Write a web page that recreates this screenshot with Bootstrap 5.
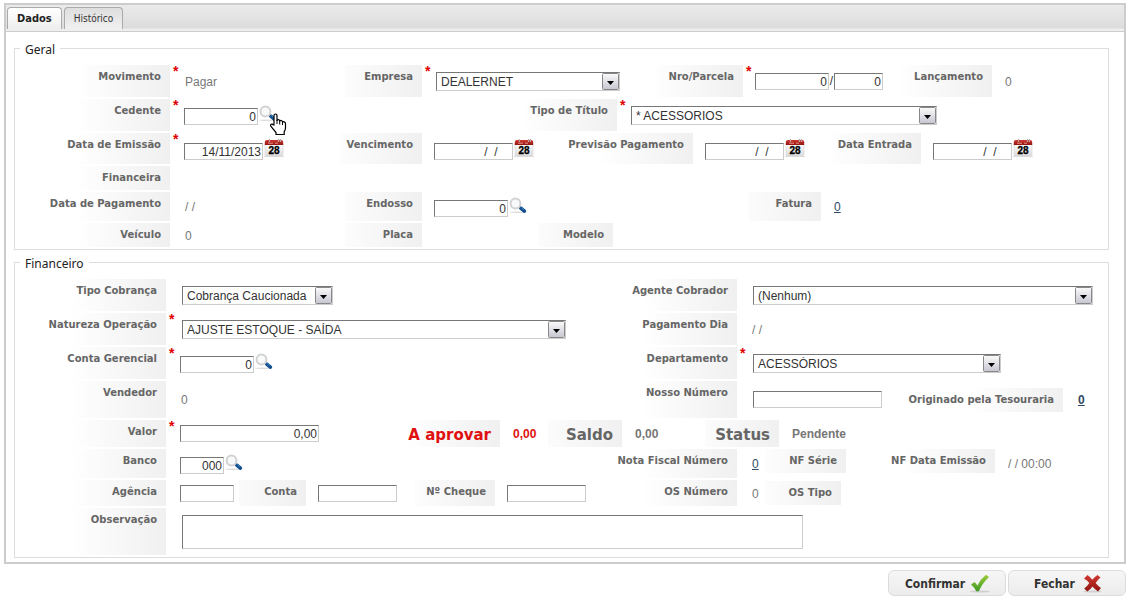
<!DOCTYPE html>
<html lang="pt-BR">
<head>
<meta charset="utf-8">
<meta name="viewport" content="width=device-width, initial-scale=1">
<title>Título</title>
<link href="https://cdn.jsdelivr.net/npm/bootstrap@5.3.0/dist/css/bootstrap.min.css" rel="stylesheet">
<style>
body { background: #fff; color: #777; font: 12px/14px "Liberation Sans", Arial, sans-serif; }

/* Panel and tabs */
.panel { border: 2px solid #ccc; margin: 3px 4px 6px; }
.panel .nav-tabs { background: linear-gradient(#ebebeb, #dcdcdc 23px, #eee 24px); border-bottom: 1px solid #ccc; height: 27px; padding: 2px 1px 2px; gap: 2px; }
.panel .nav-link { border: 1px solid #aaa; border-bottom: 0; border-radius: 4px 4px 0 0; margin: 0; padding: 0 9px; height: 22px; font: 10px/20px "DejaVu Sans Condensed", "DejaVu Sans", sans-serif; color: #333; background: linear-gradient(#dedede, #f0f0f0); }
.panel .nav-link.active { font-weight: 700; font-size: 11px; color: #222; background: linear-gradient(#fff, #eee); border-color: #aaa; }
.panel-inner { padding: 8px 15px 4px 8px; }

/* Groups */
.group { border: 1px solid #ddd; padding: 8px 3px 2px; }
.group + .group { margin-top: 4px; }
.group legend { float: none; width: auto; margin: 0 0 0 2px; padding: 2px 5px 0; font: 12px/15px "Noto Sans", sans-serif; color: #222; }
.line { display: grid; margin-bottom: 2px; height: 32px; }
.line:last-child { margin-bottom: 0; }
.line > * { min-width: 0; }
.h24 { height: 24px; } .h26 { height: 26px; } .h27 { height: 27px; } .h29 { height: 29px; }
.h31 { height: 31px; } .h37 { height: 37px; } .h47 { height: 47px; }

.g1 { grid-template-columns: 152fr 175fr 77fr 233fr 88fr 157fr 92fr 113fr; }
.g2 { grid-template-columns: 152fr 355fr 92fr 488fr; }
.g3 { grid-template-columns: 152fr 170fr 82fr 138fr 133fr 137fr 91fr 184fr; }
.g4 { grid-template-columns: 152fr 935fr; }
.g5 { grid-template-columns: 152fr 175fr 77fr 327fr 72fr 284fr; }
.g6 { grid-template-columns: 152fr 175fr 77fr 117fr 74fr 492fr; }
.f1 { grid-template-columns: 148fr 459fr 112fr 368fr; }
.f4 { grid-template-columns: 148fr 459fr 112fr 158fr 168fr 42fr; }
.f5 { grid-template-columns: 148fr 234fr 100fr 48fr 74fr 83fr 74fr 326fr; }
.f6 { grid-template-columns: 148fr 459fr 112fr 28fr 81fr 34fr 115fr 110fr; }
.f7 { grid-template-columns: 148fr 73fr 67fr 109fr 80fr 130fr 112fr 28fr 76fr 264fr; }
.f8 { grid-template-columns: 148fr 939fr; }

.tag { display: flex; justify-content: flex-end; padding: 5px 9px 0 0; white-space: nowrap; color: #666; font: bold 10px/14px "DejaVu Sans", Verdana, sans-serif; background: linear-gradient(to right, rgba(240,240,240,0), #f0f0f0) right / 95px 100% no-repeat; }
.tag-big { font-size: 15px; line-height: 20px; }
.tag-short { height: 24px; }
.val { display: flex; align-items: center; white-space: nowrap; padding-left: 12px; position: relative; }
.val.main { padding-left: 14px; }
.val > .txt { margin-left: 1px; padding-top: 1px; }
.val > b.txt { padding-top: 0; }
.val.wide { padding-left: 16px; }
.req::before { content: "*"; position: absolute; left: 3px; top: -1px; color: #e00000; font: bold 14px/14px "Liberation Sans", Arial, sans-serif; }
.due { color: #e01010; }
.val a { color: #2f4a66; }

/* Controls */
.box, .pick { border: 1px solid; border-color: #777 #ccc #ccc #777; border-radius: 0; background-color: #fff; color: #333; font: 12px/14px "Liberation Sans", Arial, sans-serif; }
.box { height: 17px; padding: 1px 1px 0; text-align: right; }
.pick { appearance: none; height: 19px; padding: 1px 18px 0 4px; margin-left: 2px;
  background: #fff url("data:image/svg+xml,%3Csvg xmlns='http://www.w3.org/2000/svg' width='17' height='17'%3E%3ClinearGradient id='g' x2='0' y2='1'%3E%3Cstop stop-color='%23fbfbfb'/%3E%3Cstop offset='1' stop-color='%23c6c6d2'/%3E%3C/linearGradient%3E%3Crect x='.5' y='.5' width='16' height='16' rx='1' fill='url(%23g)' stroke='%23888'/%3E%3Cpath d='M5 8h7l-3.500 4z' fill='%23000'/%3E%3C/svg%3E") right 0 center no-repeat; }
.area { height: 34px; margin-left: 2px; resize: none; text-align: left; }
.w45 { width: 44px; } .w49 { width: 49px; } .w54 { width: 54px; } .w74 { width: 74px; } .w79 { width: 79px; }
.w129 { width: 129px; } .w139 { width: 139px; } .w151 { width: 151px; } .w184 { width: 184px; } .w248 { width: 248px; }
.w306 { width: 306px; } .w340 { width: 340px; } .w384 { width: 384px; } .w621 { width: 621px; }
.slash { width: 5px; text-align: center; color: #333; }
.ibtn { border: 0; background: none; padding: 0; display: block; margin: 0 0 3px 1px; position: relative; }
.ibtn.date { margin-bottom: 2px; }
.ibtn svg { display: block; }
.hand { position: absolute; left: 10px; top: 8px; }

.actions { gap: 2px; }
.act { width: 118px; height: 26px; border: 1px solid #dcdcdc; border-radius: 6px; padding: 2px 0 0 2px; color: #333; background: linear-gradient(#f6f6f6, #ececec); font: bold 12px/20px "DejaVu Sans Condensed", "DejaVu Sans", sans-serif; }
</style>
</head>
<body>
<svg width="0" height="0" class="position-absolute" aria-hidden="true">
  <defs>
    <linearGradient id="lgRed" x2="0" y2="1"><stop stop-color="#d2382f"/><stop offset="1" stop-color="#8e1512"/></linearGradient>
    <linearGradient id="lgGreen" x2="0" y2="1"><stop stop-color="#9ccc35"/><stop offset="1" stop-color="#3f9a28"/></linearGradient>
    <linearGradient id="lgPage" x2="0" y2="1"><stop stop-color="#fff"/><stop offset="1" stop-color="#dcdcdc"/></linearGradient>
  </defs>
</svg>
<svg class="d-none" aria-hidden="true">
  <symbol id="lens" viewBox="0 0 18 17">
    <ellipse cx="8" cy="15.300" rx="8" ry=".8" fill="#ddd"/>
    <path d="M10.500 10.500l2 1.500" stroke="#999" stroke-width="2"/>
    <path d="M11.800 11.200l3.600 3" stroke="#134f8f" stroke-width="3.600" stroke-linecap="round"/>
    <path d="M12.300 10.700l2.600 2" stroke="#3f86c4" stroke-width="1"/>
    <circle cx="6.500" cy="6.500" r="4.900" fill="#f7f9fa" stroke="#d2d2d2" stroke-width="2"/>
  </symbol>
  <symbol id="cal" viewBox="0 0 20 20">
    <rect x="0" y="18" width="20" height="1" fill="#ddd"/>
    <rect x="1" y="5" width="18" height="13" rx="1.500" fill="url(#lgPage)" stroke="#d5d5d5" stroke-width=".6"/>
    <path d="M.8 7V4Q.8 2 3 2H17Q19.200 2 19.200 4V7z" fill="url(#lgRed)"/>
    <path d="M5.500 1v3M14.500 1v3M16.500 1v3" stroke="#b9a5a5" stroke-width="1.200"/>
    <path d="M4 5.200h5M11 5.200h3" stroke="#e9908a" stroke-width="1"/>
    <text x="10" y="15.500" text-anchor="middle" font-family="Liberation Sans, Arial, sans-serif" font-weight="700" font-size="10" fill="#000" stroke="#000" stroke-width=".3">28</text>
  </symbol>
</svg>

<main class="panel">
  <ul class="nav nav-tabs" role="tablist">
    <li class="nav-item"><button class="nav-link active" type="button" role="tab" aria-selected="true">Dados</button></li>
    <li class="nav-item"><button class="nav-link" type="button" role="tab" aria-selected="false">Histórico</button></li>
  </ul>
  <form class="panel-inner" id="titulo">
    <fieldset class="group">
      <legend>Geral</legend>
      <div class="line g1">
        <span class="tag">Movimento</span><div class="val main req"><span class="txt">Pagar</span></div>
        <label class="tag" for="empresa">Empresa</label><div class="val req"><select class="pick w184" id="empresa"><option>DEALERNET</option></select></div>
        <label class="tag" for="nro">Nro/Parcela</label><div class="val req"><input class="box w74" id="nro" value="0"><span class="slash">/</span><input class="box w49" aria-label="Parcela" value="0"></div>
        <span class="tag">Lançamento</span><div class="val"><span class="txt">0</span></div>
      </div>
      <div class="line g2">
        <label class="tag" for="cedente">Cedente</label>
        <div class="val main req"><div class="d-flex align-items-end"><input class="box w74" id="cedente" value="0"><button class="ibtn" type="button" aria-label="Buscar cedente"><svg width="18" height="17"><use href="#lens"/></svg><svg class="hand" width="18" height="23" viewBox="0 0 18 23"><path d="M5 12V2.500Q5 1 6.500 1T8 2.500V8Q8 6.500 9.400 6.700T10.700 8.500Q11 7.200 12.300 7.500T13.500 9.500Q14 8.500 15.200 8.800T16.500 10.500V15Q16.500 17 15.200 18.500V21.500H7V19.500L2 13.500Q1 12 2.200 11.300T4.200 12z" fill="#fff" stroke="#000" stroke-width="1.200"/><path d="M8 7v4M10.700 8v3.500M13.500 9v3" stroke="#000" stroke-width="1"/></svg></button></div></div>
        <label class="tag" for="tipo">Tipo de Título</label><div class="val req"><select class="pick w306" id="tipo"><option>* ACESSORIOS</option></select></div>
      </div>
      <div class="line g3 h31">
        <label class="tag" for="emissao">Data de Emissão</label>
        <div class="val main req"><div class="d-flex align-items-end"><input class="box w79" id="emissao" value="14/11/2013"><button class="ibtn date" type="button" aria-label="Calendário"><svg width="20" height="20"><use href="#cal"/></svg></button></div></div>
        <label class="tag" for="venc">Vencimento</label>
        <div class="val"><div class="d-flex align-items-end"><input class="box w79" id="venc" value="/  /    "><button class="ibtn date" type="button" aria-label="Calendário"><svg width="20" height="20"><use href="#cal"/></svg></button></div></div>
        <label class="tag" for="prev">Previsão Pagamento</label>
        <div class="val"><div class="d-flex align-items-end"><input class="box w79" id="prev" value="/  /    "><button class="ibtn date" type="button" aria-label="Calendário"><svg width="20" height="20"><use href="#cal"/></svg></button></div></div>
        <label class="tag" for="entrada">Data Entrada</label>
        <div class="val"><div class="d-flex align-items-end"><input class="box w79" id="entrada" value="/  /    "><button class="ibtn date" type="button" aria-label="Calendário"><svg width="20" height="20"><use href="#cal"/></svg></button></div></div>
      </div>
      <div class="line g4 h24"><span class="tag">Financeira</span><div class="val"></div></div>
      <div class="line g5 h29">
        <span class="tag">Data de Pagamento</span><div class="val main"><span class="txt">/ /</span></div>
        <label class="tag" for="endosso">Endosso</label>
        <div class="val"><div class="d-flex align-items-end"><input class="box w74" id="endosso" value="0"><button class="ibtn" type="button" aria-label="Buscar endosso"><svg width="18" height="17"><use href="#lens"/></svg></button></div></div>
        <span class="tag">Fatura</span><div class="val"><a class="txt" href="#fatura">0</a></div>
      </div>
      <div class="line g6 h24">
        <span class="tag">Veículo</span><div class="val main"><span class="txt">0</span></div>
        <span class="tag">Placa</span><div class="val"></div>
        <span class="tag">Modelo</span><div class="val"></div>
      </div>
    </fieldset>

    <fieldset class="group">
      <legend>Financeiro</legend>
      <div class="line f1">
        <label class="tag" for="cobranca">Tipo Cobrança</label><div class="val main"><select class="pick w151" id="cobranca"><option>Cobrança Caucionada</option></select></div>
        <label class="tag" for="agente">Agente Cobrador</label><div class="val main"><select class="pick w340" id="agente"><option>(Nenhum)</option></select></div>
      </div>
      <div class="line f1">
        <label class="tag" for="natureza">Natureza Operação</label><div class="val main req"><select class="pick w384" id="natureza"><option>AJUSTE ESTOQUE - SAÍDA</option></select></div>
        <span class="tag">Pagamento Dia</span><div class="val main"><span class="txt">/ /</span></div>
      </div>
      <div class="line f1">
        <label class="tag" for="gerencial">Conta Gerencial</label>
        <div class="val main req"><div class="d-flex align-items-end"><input class="box w74" id="gerencial" value="0"><button class="ibtn" type="button" aria-label="Buscar conta"><svg width="18" height="17"><use href="#lens"/></svg></button></div></div>
        <label class="tag" for="depto">Departamento</label><div class="val main req"><select class="pick w248" id="depto"><option>ACESSÓRIOS</option></select></div>
      </div>
      <div class="line f4 h37">
        <span class="tag">Vendedor</span><div class="val main"><span class="txt">0</span></div>
        <label class="tag" for="nosso">Nosso Número</label><div class="val wide"><input class="box w129" id="nosso"></div>
        <span class="tag tag-short align-self-center">Originado pela Tesouraria</span><div class="val main"><a class="txt fw-bold" href="#tesouraria">0</a></div>
      </div>
      <div class="line f5 h27">
        <label class="tag" for="valor">Valor</label><div class="val main req"><input class="box w139" id="valor" value="0,00"></div>
        <span class="tag tag-big due">A aprovar</span><div class="val"><b class="txt due">0,00</b></div>
        <span class="tag tag-big">Saldo</span><div class="val"><b class="txt">0,00</b></div>
        <span class="tag tag-big">Status</span><div class="val"><b class="txt">Pendente</b></div>
      </div>
      <div class="line f6 h29">
        <label class="tag" for="banco">Banco</label>
        <div class="val main"><div class="d-flex align-items-end"><input class="box w45" id="banco" value="000"><button class="ibtn" type="button" aria-label="Buscar banco"><svg width="18" height="17"><use href="#lens"/></svg></button></div></div>
        <span class="tag">Nota Fiscal Número</span><div class="val main"><a class="txt" href="#nota">0</a></div>
        <span class="tag tag-short">NF Série</span><div class="val"></div>
        <span class="tag tag-short">NF Data Emissão</span><div class="val"><span class="txt">/ / 00:00</span></div>
      </div>
      <div class="line f7 h26">
        <label class="tag" for="agencia">Agência</label><div class="val main"><input class="box w54" id="agencia"></div>
        <label class="tag" for="conta">Conta</label><div class="val"><input class="box w79" id="conta"></div>
        <label class="tag" for="cheque">Nº Cheque</label><div class="val"><input class="box w79" id="cheque"></div>
        <span class="tag">OS Número</span><div class="val main"><span class="txt">0</span></div>
        <span class="tag tag-short align-self-center">OS Tipo</span><div class="val"></div>
      </div>
      <div class="line f8 h47">
        <label class="tag" for="obs">Observação</label><div class="val main"><textarea class="box area w621" id="obs"></textarea></div>
      </div>
    </fieldset>
  </form>
</main>

<div class="actions d-flex justify-content-end px-1">
  <button class="act d-flex align-items-center justify-content-center gap-1" type="submit" form="titulo">Confirmar
    <svg width="22" height="20" viewBox="0 0 22 20"><ellipse cx="11" cy="17.500" rx="10" ry="1" fill="#d0d0d0"/><path d="M2 10.500L5.500 8Q7.500 9.800 8.300 11.800Q11.500 5 17 .8L20 3Q13.500 9 9.800 17.200H7.200Q5.500 13.500 2 10.500z" fill="url(#lgGreen)"/></svg></button>
  <button class="act d-flex align-items-center justify-content-center gap-2" type="button">Fechar
    <svg width="19" height="20" viewBox="0 0 19 20"><ellipse cx="9.500" cy="17.500" rx="9" ry="1" fill="#d0d0d0"/><path d="M1 4.500L4.500 1Q7.500 3.200 9.300 5.800Q11.500 3 14.500 1L17.500 3.500Q14.500 6 12.600 9Q15 12 18 14L15 17.500Q12 15.500 9.500 12.500Q7.500 15.500 4.300 17.500L1.200 14.500Q4.500 12 6.300 9Q4 6.300 1 4.500z" fill="url(#lgRed)"/></svg></button>
</div>
<script src="https://cdn.jsdelivr.net/npm/bootstrap@5.3.0/dist/js/bootstrap.bundle.min.js"></script>
</body>
</html>
